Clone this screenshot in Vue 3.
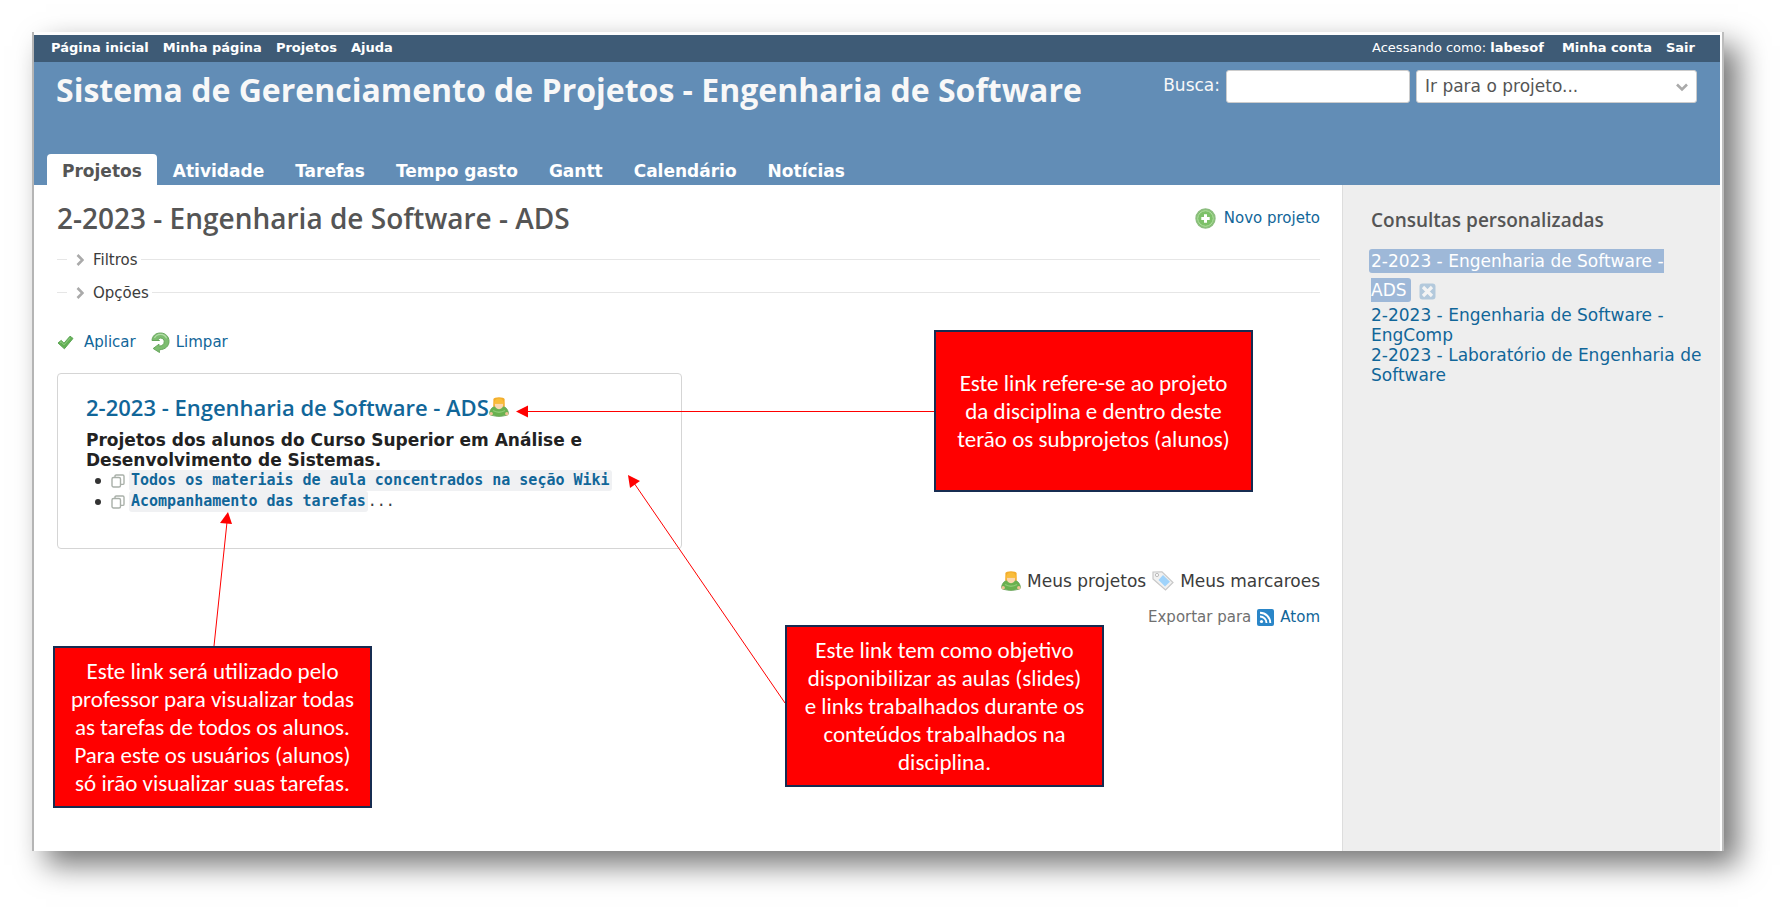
<template>
  <div class="stage">
    <div class="frame">
      <div class="top-menu">
        <nav class="top-links">
          <a v-for="item in topLinks" :key="item" href="#">{{ item }}</a>
        </nav>
        <div class="account">
          <span>Acessando como: <a href="#">labesof</a></span>
          <nav class="top-links">
            <a href="#">Minha conta</a>
            <a href="#">Sair</a>
          </nav>
        </div>
      </div>

      <header class="header">
        <div class="header-row">
          <h1>Sistema de Gerenciamento de Projetos - Engenharia de Software</h1>
          <form class="quick-search" @submit.prevent>
            <label for="q">Busca:</label>
            <input id="q" v-model="query" type="text" />
            <div class="jump">
              <select v-model="project" aria-label="Ir para o projeto">
                <option value="">Ir para o projeto...</option>
                <option v-for="p in projects" :key="p" :value="p">{{ p }}</option>
              </select>
              <svg width="14" height="9" viewBox="0 0 14 9"><path d="M2 1.5l5 5 5-5" fill="none" stroke="#aaa" stroke-width="2.6" /></svg>
            </div>
          </form>
        </div>
        <nav class="tabs">
          <a v-for="tab in tabs" :key="tab" href="#" :class="{ selected: tab === activeTab }" @click.prevent="activeTab = tab">{{ tab }}</a>
        </nav>
      </header>

      <div class="main">
        <main class="content">
          <div class="title-row">
            <h2>2-2023 - Engenharia de Software - ADS</h2>
            <a href="#" class="new-project">
              <svg width="21" height="21" viewBox="0 0 21 21">
                <circle cx="10.5" cy="10.5" r="9.5" fill="#7cc068" stroke="#8dbd80" stroke-width="1.4" />
                <circle cx="10.5" cy="10.5" r="7.8" fill="none" stroke="#b5dfa5" stroke-width="1" />
                <path d="M10.5 6.3v8.4M6.3 10.5h8.4" stroke="#fff" stroke-width="3" />
              </svg>
              Novo projeto
            </a>
          </div>

          <button v-for="name in ['Filtros', 'Opções']" :key="name" type="button" class="fold">
            <svg width="8" height="12" viewBox="0 0 8 12"><path d="M1.5 1l5 5-5 5" fill="none" stroke="#aaa" stroke-width="2.6" /></svg>
            {{ name }}
          </button>

          <p class="actions">
            <a href="#" class="apply">
              <svg width="17" height="15" viewBox="0 0 17 15">
                <path d="M1 8l3.2-2.6L7 8.2 13 1.2 16 3.4 7.4 13.8z" fill="#62b054" stroke="#5da556" stroke-width="1" stroke-linejoin="round" />
                <path d="M3 7.6l1.2-.8L7 9.8l6.4-7" fill="none" stroke="#93cf86" stroke-width="1" />
              </svg>
              Aplicar
            </a>
            <a href="#" class="clear">
              <svg width="19" height="21" viewBox="0 0 19 21">
                <path d="M1 8.5C1.2 4 4.5 1 9.5 1c5 0 8.5 3.6 8.5 8.3 0 4.9-3.7 8.2-9.8 8.500L8.500 20.500 2.200 16.500 8 12.200v2c3.500-.2 5.200-2 5.200-4.500 0-2.200-1.500-3.600-3.600-3.600-1.300 0-2.200.6-2.700 1.400l1.600 1z" fill="#7dbd70" stroke="#67a65c" stroke-width="1" stroke-linejoin="round" />
                <path d="M3.5 6A6.8 6.8 0 0 1 15.6 6.2" fill="none" stroke="#b3dda8" stroke-width="1.2" />
              </svg>
              Limpar
            </a>
          </p>

          <section class="card">
            <h3>
              <a href="#">2-2023 - Engenharia de Software - ADS</a>
              <svg width="20" height="20" viewBox="0 0 20 20"><use href="#icon-user" /></svg>
            </h3>
            <p>Projetos dos alunos do Curso Superior em Análise e Desenvolvimento de Sistemas.</p>
            <ul>
              <li v-for="link in wikiLinks" :key="link.text">
                <svg width="14" height="14" viewBox="0 0 14 14" fill="none" stroke="#a9b0a9" stroke-width="1.4">
                  <rect x="1" y="3.5" width="8.5" height="9.5" rx="1.5" />
                  <path d="M4 3.5V2.2A1.2 1.2 0 0 1 5.2 1h6.6A1.2 1.2 0 0 1 13 2.2v7a1.2 1.2 0 0 1-1.2 1.2H9.6" />
                </svg>
                <code><a href="#">{{ link.text }}</a></code><span class="tail">{{ link.tail }}</span>
              </li>
            </ul>
          </section>

          <p class="legend">
            <svg width="20" height="20" viewBox="0 0 20 20">
              <g id="icon-user">
                <path d="M5 9.500h10c2.500 1.200 4.300 3.800 4.500 7.300-.6 1.600-2.200 1.600-3.500 1.800-3 1.100-9 1.100-12 0-1.300-.2-2.900-.2-3.500-1.800.2-3.500 2-6.100 4.500-7.300z" fill="#69b14f" stroke="#6aa35a" stroke-width=".8" />
                <path d="M4 13.500c3.500 2 8.500 2 12 0" fill="none" stroke="#8ecb76" stroke-width="1.4" />
                <circle cx="2.200" cy="16.800" r="1.700" fill="#efc297" />
                <circle cx="17.800" cy="16.800" r="1.700" fill="#efc297" />
                <path d="M4.400 2Q5.200.2 10 .2T15.600 2l.2 7.500H4.200z" fill="#f3ad2c" />
                <path d="M5.800 6.500h8.400c.2 3.600-1.600 5.700-4.200 5.700S5.600 10.100 5.800 6.500z" fill="#fbd7ae" />
                <path d="M5 6.800Q5.600 1.500 10 1.500t5 5.300z" fill="#f9bd3a" />
              </g>
            </svg>
            Meus projetos
            <svg width="22" height="20" viewBox="0 0 22 20">
              <path d="M1 1l9-.2L21 11.500 13.500 19 1 8z" fill="#f1f1f1" stroke="#c8c8c8" stroke-width="1.2" />
              <path d="M11 4l7 6.700-5 4.700L6.500 9z" fill="#9fd3fb" />
              <circle cx="5" cy="4" r="1.600" fill="#fff" stroke="#bbb" />
            </svg>
            Meus marcaroes
          </p>
          <p class="export">
            Exportar para
            <svg width="17" height="17" viewBox="0 0 17 17">
              <rect width="17" height="17" rx="2" fill="#2a86c8" />
              <circle cx="4.5" cy="12.5" r="1.6" fill="#fff" />
              <path d="M3 7.5a6.5 6.5 0 0 1 6.500 6.500M3 3.700A10.300 10.300 0 0 1 13.300 14" fill="none" stroke="#fff" stroke-width="1.9" />
            </svg>
            <a href="#">Atom</a>
          </p>
        </main>

        <aside class="sidebar">
          <h3>Consultas personalizadas</h3>
          <ul>
            <li class="current">
              <a href="#" class="selected">2-2023 - Engenharia de Software - ADS</a>
              <button type="button" aria-label="Limpar">
                <svg width="17" height="17" viewBox="0 0 17 17">
                  <rect x=".5" y=".5" width="16" height="16" rx="3" fill="#b3c9dc" />
                  <path d="M4 4l9 9M13 4l-9 9" stroke="#f4f4f4" stroke-width="3.2" />
                </svg>
              </button>
            </li>
            <li v-for="q in queries" :key="q"><a href="#">{{ q }}</a></li>
          </ul>
        </aside>
      </div>

      <svg class="arrows" width="100%" height="100%">
        <g stroke="#f00" fill="#f00">
          <g v-for="arrow in arrows" :key="arrow.head">
            <path :d="arrow.line" />
            <polygon :points="arrow.head" stroke="none" />
          </g>
        </g>
      </svg>
      <div class="note note-project">{{ notes.project }}</div>
      <div class="note note-tasks">{{ notes.tasks }}</div>
      <div class="note note-wiki">{{ notes.wiki }}</div>
    </div>
  </div>
</template>

<script setup>
import { ref } from 'vue'

const query = ref('')
const project = ref('')
const activeTab = ref('Projetos')

const topLinks = ['Página inicial', 'Minha página', 'Projetos', 'Ajuda']
const tabs = ['Projetos', 'Atividade', 'Tarefas', 'Tempo gasto', 'Gantt', 'Calendário', 'Notícias']
const projects = ['2-2023 - Engenharia de Software - ADS']
const queries = [
  '2-2023 - Engenharia de Software - EngComp',
  '2-2023 - Laboratório de Engenharia de Software'
]
const wikiLinks = [
  { text: 'Todos os materiais de aula concentrados na seção Wiki', tail: '' },
  { text: 'Acompanhamento das tarefas', tail: '...' }
]

const notes = {
  project: 'Este link refere-se ao projeto\nda disciplina e dentro deste\nterão os subprojetos (alunos)',
  tasks: 'Este link será utilizado pelo\nprofessor para visualizar todas\nas tarefas de todos os alunos.\nPara este os usuários (alunos)\nsó irão visualizar suas tarefas.',
  wiki: 'Este link tem como objetivo\ndisponibilizar as aulas (slides)\ne links trabalhados durante os\nconteúdos trabalhados na\ndisciplina.'
}
// start at the note, end at the thing it explains
const arrows = [
  { line: 'M900 379.5H492', head: '482,379.5 494,373.5 494,385.5' },
  { line: 'M180 614L193 490', head: '194,480 186,491 198,492' },
  { line: 'M751 671L600 451', head: '594,443 606,449 596,456' }
]
</script>

<style>
body {
  margin: 0;
  background: #fff;
}
</style>

<style scoped>
.stage {
  box-sizing: border-box;
  min-height: 100vh;
  padding: 32px 65px 65px 32px;
  display: flex;
  font-family: Verdana, "DejaVu Sans", sans-serif;
  font-size: 15px;
  color: #3c3c3c;
}

.frame {
  position: relative;
  box-sizing: border-box;
  flex: 1;
  min-width: 0;
  display: flex;
  flex-direction: column;
  padding: 3px 2px 0 0;
  border-left: 2px solid #b5b5b5;
  border-right: 2px solid #bdbdbd;
  background: #fdfdfd;
  box-shadow: 14px 14px 28px rgba(0, 0, 0, 0.54);
}

a {
  color: #169;
  text-decoration: none;
}

a:hover {
  text-decoration: underline;
}

h1,
h2,
h3,
p,
ul {
  margin: 0;
  padding: 0;
}

h1,
h2,
h3 {
  font-family: "Trebuchet MS", "Open Sans", sans-serif;
  font-weight: 600;
}

svg {
  flex: none;
}

.top-menu {
  display: flex;
  justify-content: space-between;
  height: 27px;
  padding: 0 25px 0 17px;
  background: #3e5b76;
  color: #fff;
  font-size: 13px;
  line-height: 25px;
}

.top-menu a {
  color: #fff;
  font-weight: bold;
}

.top-links {
  display: flex;
  gap: 14px;
}

.account {
  display: flex;
  gap: 18px;
}

.header {
  display: flex;
  flex-direction: column;
  justify-content: space-between;
  height: 123px;
  background: #628db6;
  color: #f8f8f8;
}

.header-row {
  display: flex;
  justify-content: space-between;
  padding: 8px 23px 0 22px;
}

h1 {
  font-size: 32px;
  font-weight: bold;
  line-height: 39px;
  white-space: nowrap;
}

.quick-search {
  display: flex;
  align-items: center;
  gap: 6px;
  height: 33px;
  font-size: 17px;
}

.quick-search label {
  padding-bottom: 3px;
}

.quick-search input,
.quick-search select {
  box-sizing: border-box;
  height: 33px;
  border: 1px solid #ccc;
  border-radius: 3px;
  background: #fff;
  color: #555;
  font-family: inherit;
  font-size: 17px;
}

.quick-search input {
  width: 184px;
}

.jump {
  position: relative;
}

.jump select {
  width: 281px;
  padding: 0 32px 2px 8px;
  appearance: none;
}

.jump svg {
  position: absolute;
  right: 8px;
  top: 13px;
  pointer-events: none;
}

.tabs {
  display: flex;
  gap: 1px;
  padding-left: 13px;
}

.tabs a {
  padding: 3px 15px 0;
  border-radius: 4px 4px 0 0;
  color: #fff;
  font-size: 17px;
  font-weight: bold;
  line-height: 28px;
}

.tabs a.selected {
  background: #fff;
  color: #555;
}

.main {
  flex: 1;
  display: flex;
  background: #eee;
}

.content {
  flex: 1;
  min-width: 0;
  padding: 12px 22px 16px 23px;
  border-right: 1px solid #ddd;
  background: #fff;
}

.title-row {
  display: flex;
  justify-content: space-between;
  align-items: center;
  height: 42px;
  margin-bottom: 4px;
}

h2 {
  color: #555;
  font-size: 28px;
}

.new-project {
  display: flex;
  align-items: center;
  gap: 8px;
}

.fold {
  display: flex;
  align-items: center;
  gap: 9px;
  width: 100%;
  height: 33px;
  padding: 0;
  border: 0;
  background: none;
  color: inherit;
  font-family: inherit;
  font-size: 15px;
  white-space: nowrap;
}

.fold::before,
.fold::after {
  content: "";
  height: 1px;
  background: #e6e6e6;
}

.fold::before {
  width: 10px;
}

.fold::after {
  flex: 1;
  margin-left: -6px;
}

.actions {
  display: flex;
  gap: 15px;
  height: 20px;
  margin: 23px 0 21px;
  line-height: 20px;
}

.actions a {
  display: flex;
  align-items: center;
}

.apply {
  gap: 10px;
}

.clear {
  gap: 6px;
}

.card {
  box-sizing: border-box;
  width: 625px;
  max-width: 100%;
  min-height: 176px;
  padding: 19px 28px;
  border: 1px solid #d5d5d5;
  border-radius: 4px;
}

.card h3 {
  display: flex;
  align-items: center;
  height: 28px;
  margin-bottom: 9px;
  font-size: 22px;
  line-height: 28px;
}

.card p {
  color: #222;
  font-size: 17px;
  font-weight: bold;
  line-height: 20px;
}

.card ul {
  list-style: none;
}

.card li {
  display: flex;
  align-items: center;
  height: 21px;
  line-height: 21px;
}

.card li::before {
  content: "";
  width: 6px;
  height: 6px;
  margin: 0 10px 0 9px;
  border-radius: 50%;
  background: #333;
}

.card code,
.card .tail {
  font-family: Consolas, "DejaVu Sans Mono", monospace;
  font-size: 15px;
}

.card code {
  margin-left: 4px;
  padding: 0 2px;
  border-radius: 3px;
  background: #f0f1f3;
  font-weight: bold;
}

.legend {
  display: flex;
  justify-content: flex-end;
  align-items: center;
  gap: 6px;
  height: 24px;
  margin-top: 20px;
  font-size: 17px;
}

.export {
  display: flex;
  justify-content: flex-end;
  align-items: center;
  gap: 6px;
  height: 20px;
  margin-top: 14px;
  color: #707070;
}

.sidebar {
  box-sizing: border-box;
  width: 377px;
  padding: 21px 15px 20px 28px;
}

.sidebar h3 {
  margin-bottom: 13px;
  color: #555;
  font-size: 19px;
  line-height: 28px;
}

.sidebar ul {
  list-style: none;
  font-size: 17px;
  line-height: 20px;
}

.sidebar .current {
  line-height: 29px;
}

.sidebar .selected {
  margin-left: -2px;
  padding: 2px 4px 2px 2px;
  border-radius: 3px;
  background: #9eb8d8;
  color: #fff;
}

.sidebar button {
  margin-left: 8px;
  padding: 0;
  border: 0;
  background: none;
  vertical-align: middle;
}

.sidebar button svg {
  display: block;
}

.arrows {
  position: absolute;
  inset: 0;
  pointer-events: none;
}

.note {
  position: absolute;
  box-sizing: border-box;
  display: flex;
  align-items: center;
  justify-content: center;
  width: 319px;
  height: 162px;
  border: 2px solid #172c51;
  background: #f00;
  color: #fff;
  font-family: Calibri, Carlito, Lato, sans-serif;
  font-size: 23px;
  line-height: 28px;
  text-align: center;
  white-space: pre;
}

.note-project {
  left: 900px;
  top: 298px;
}

.note-tasks {
  left: 19px;
  top: 614px;
}

.note-wiki {
  left: 751px;
  top: 593px;
}
</style>
